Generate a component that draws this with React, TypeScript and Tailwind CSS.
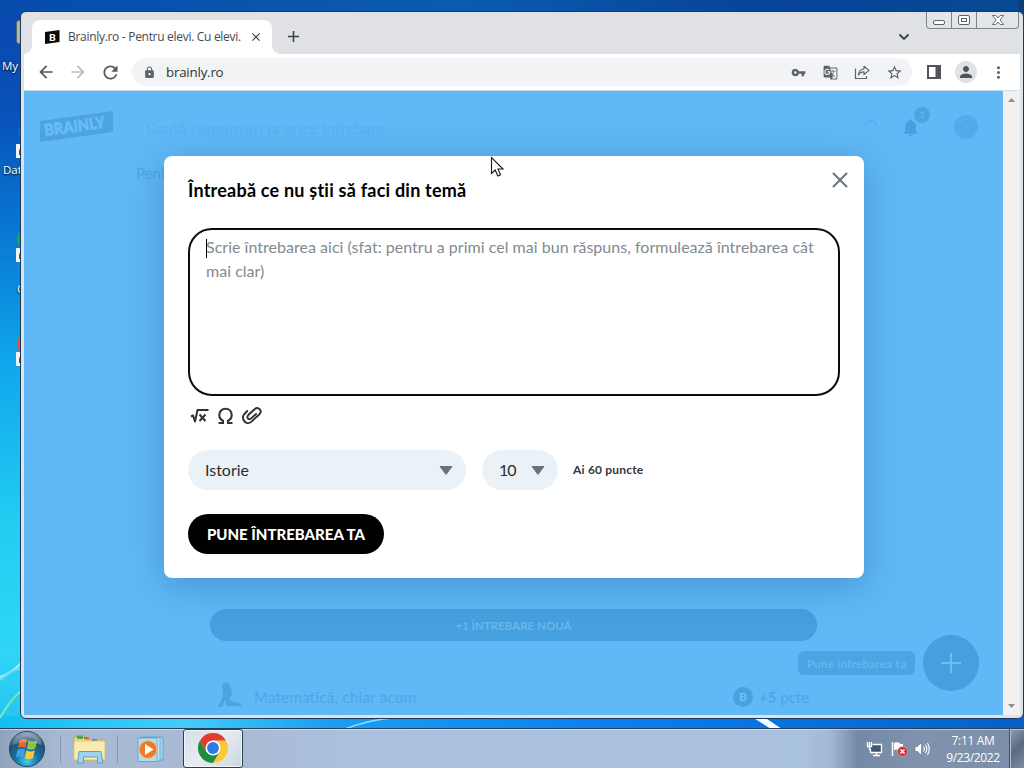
// src/App.tsx
// Windows 7 desktop with a Chrome window open on the ask-question dialog
import type { ReactNode } from 'react';
import {
  MdAdd,
  MdArrowBack,
  MdArrowForward,
  MdClose,
  MdGTranslate,
  MdLock,
  MdMoreVert,
  MdNotifications,
  MdPerson,
  MdRefresh,
  MdStarBorder,
  MdVpnKey
} from 'react-icons/md';

function Wallpaper() {
  return (
    <svg className="absolute inset-0" width="1024" height="768" viewBox="0 0 1024 768">
      <defs>
        <linearGradient id="sky" x1="0" y1="0" x2="0" y2="1">
          <stop offset="0" stopColor="#0a48ae" />
          <stop offset="0.14" stopColor="#0850b8" />
          <stop offset="0.3" stopColor="#0877d2" />
          <stop offset="0.48" stopColor="#10a8ec" />
          <stop offset="0.68" stopColor="#22ccf2" />
          <stop offset="0.85" stopColor="#2fd6f6" />
          <stop offset="1" stopColor="#20b8f0" />
        </linearGradient>
        <linearGradient id="top" x1="0" y1="0" x2="1" y2="0">
          <stop offset="0" stopColor="#064cab" />
          <stop offset="0.45" stopColor="#0a5caf" />
          <stop offset="0.75" stopColor="#06439a" />
          <stop offset="1" stopColor="#064a92" />
        </linearGradient>
        <linearGradient id="bottom" x1="0" y1="0" x2="1" y2="0">
          <stop offset="0" stopColor="#14bdf3" />
          <stop offset="0.18" stopColor="#43cdf8" />
          <stop offset="0.32" stopColor="#1a9ff2" />
          <stop offset="0.6" stopColor="#0a7ff0" />
          <stop offset="1" stopColor="#0560c8" />
        </linearGradient>
      </defs>
      <rect width="1024" height="768" fill="url(#sky)" />
      <rect width="1024" height="13" fill="url(#top)" />
      <rect x="1018" width="6" height="768" fill="#0a3f7c" />
      <rect y="716" width="1024" height="14" fill="url(#bottom)" />
      <path d="M0 677 Q12 673 21 663" stroke="#a5ecff" strokeWidth="2" fill="none" />
      <path d="M0 680 Q12 670 21 668" stroke="#6fdcf8" strokeWidth="2" fill="none" />
      <path d="M0 718 Q10 700 21 691" stroke="#7fe8b0" strokeWidth="2" fill="none" />
      <path d="M345 729 Q368 720 392 718" stroke="#8fdcff" strokeWidth="1.5" fill="none" />
      <path d="M752 717 L764 717 L782 729 L771 729 Z" fill="#f4fbff" />
    </svg>
  );
}

function ShortcutArrow() {
  return (
    <svg className="absolute bottom-0 left-[16px]" width="12" height="14" viewBox="0 0 12 14">
      <rect width="12" height="14" fill="#f2f4f7" />
      <path d="M4 11 V7 Q4 5 6 5" stroke="#15386d" strokeWidth="1.6" fill="none" />
    </svg>
  );
}

function DesktopIcons() {
  return (
    <div className="absolute left-0 top-0 h-[400px] w-[40px] text-[11.5px] leading-[14px] text-white font-['Open_Sans','Noto_Sans',sans-serif] [text-shadow:0_1px_2px_#000]">
      <div className="absolute left-[16px] top-[20px] h-[24px] w-[10px] rounded-[3px] border border-[#5c6a58] bg-[#a9b7c2]" />
      <span className="absolute left-[2px] top-[59px]">My</span>
      <div className="absolute left-0 top-[120px] h-[38px] w-[30px]">
        <span className="absolute left-[19px] top-[4px] h-[18px] w-[12px] rounded-full bg-[#a33a6d]" />
        <ShortcutArrow />
      </div>
      <span className="absolute left-[3px] top-[163px]">Dat</span>
      <div className="absolute left-0 top-[224px] h-[38px] w-[30px]">
        <span className="absolute left-[17px] top-[4px] h-[22px] w-[22px] rounded-full bg-[#21a04a]" />
        <ShortcutArrow />
      </div>
      <span className="absolute left-[17px] top-[282px]">G</span>
      <div className="absolute left-0 top-[328px] h-[38px] w-[30px]">
        <span className="absolute left-[17px] top-[4px] h-[24px] w-[24px] rounded-full bg-[#e8503a]" />
        <ShortcutArrow />
      </div>
    </div>
  );
}

function CaptionButtons() {
  return (
    <div className="absolute right-[4px] top-0 flex h-[17px] w-[93px] rounded-b-[4px] border border-t-0 border-[#80848c] bg-[#e3e5e9]">
      <div className="flex w-[25px] justify-center border-r border-[#80848c] pt-[8px]">
        <span className="h-[5px] w-[12px] rounded-[2px] border border-[#5c6068] bg-white" />
      </div>
      <div className="flex w-[25px] justify-center border-r border-[#80848c] pt-[3px]">
        <span className="flex h-[10px] w-[12px] items-center justify-center rounded-[2px] border border-[#5c6068] bg-white">
          <span className="h-[4px] w-[6px] border border-[#5c6068]" />
        </span>
      </div>
      <div className="flex flex-1 justify-center pt-[3px]">
        <svg width="12" height="10" viewBox="0 0 12 10">
          <path d="M0.5 0.5 H3.8 L6 3 L8.2 0.5 H11.5 L8 5 L11.5 9.5 H8.2 L6 7 L3.8 9.5 H0.5 L4 5 Z" fill="#fff" stroke="#5c6068" strokeWidth="0.9" />
        </svg>
      </div>
    </div>
  );
}

function TabStrip() {
  return (
    <div className="relative flex h-[42px] items-end rounded-t-[5px] bg-[#dfe1e5] pl-[8px]">
      <div className="relative flex h-[34px] w-[240px] items-center rounded-t-[8px] bg-white pl-[13px]">
        <span className="absolute -left-[8px] bottom-0 h-[8px] w-[8px] bg-[radial-gradient(circle_at_0_0,transparent_7.5px,white_8px)]" />
        <span className="absolute -right-[8px] bottom-0 h-[8px] w-[8px] bg-[radial-gradient(circle_at_100%_0,transparent_7.5px,white_8px)]" />
        <svg width="15" height="16" viewBox="0 0 15 16">
          <path d="M0 3 L14.5 1 V13 L0 15 Z" fill="#0a0a0a" />
          <text x="3.9" y="12" fontSize="10" fontWeight="900" fill="#fff" fontFamily="Lato">B</text>
        </svg>
        <span className="ml-[8px] w-[176px] whitespace-nowrap text-[12px] tracking-[-0.3px] text-[#45494d] font-['Open_Sans','Noto_Sans',sans-serif]">
          Brainly.ro - Pentru elevi. Cu elevi.
        </span>
        <MdClose className="ml-[5px] text-[14px] text-[#3c4043]" />
      </div>
      <MdAdd className="mb-[8px] ml-[12px] text-[19px] text-[#3c4043]" />
      <svg className="mb-[11px] ml-auto mr-[110px]" width="12" height="12" viewBox="0 0 12 12">
        <path d="M1.5 3.5 L6 8 L10.5 3.5" fill="none" stroke="#3c4043" strokeWidth="1.8" />
      </svg>
    </div>
  );
}

function BarIcon({ children }: { children: ReactNode }) {
  return <span className="flex w-8 items-center justify-center">{children}</span>;
}

function AddressBar() {
  return (
    <div className="flex h-[36px] items-center bg-white pl-[6px] text-[#5f6368]">
      <BarIcon><MdArrowBack className="text-[20px] text-[#54585c]" /></BarIcon>
      <BarIcon><MdArrowForward className="text-[20px] text-[#b9bbbe]" /></BarIcon>
      <BarIcon><MdRefresh className="text-[21px] text-[#54585c]" /></BarIcon>
      <div className="ml-[6px] flex h-[28px] w-[780px] items-center rounded-full bg-[#f1f3f4] pl-[11px]">
        <MdLock className="text-[13px]" />
        <span className="ml-[10px] flex-1 text-[13.3px] leading-[18px] tracking-[-0.2px] text-[#303236] font-['Open_Sans','Noto_Sans',sans-serif]">
          brainly.ro
        </span>
        <BarIcon><MdVpnKey className="text-[15px]" /></BarIcon>
        <BarIcon><MdGTranslate className="text-[15px]" /></BarIcon>
        <BarIcon>
          <svg width="16" height="16" viewBox="0 0 16 16" fill="none" stroke="#5f6368" strokeWidth="1.2">
            <path d="M1.5 4.5 V14.5 H12.5 V12" />
            <path d="M4.5 11 C4.8 7.5 6.5 5.3 10 5 V2.3 L15 6.4 L10 10.5 V7.8 C7.5 7.8 5.7 8.8 4.5 11 Z" strokeLinejoin="round" />
          </svg>
        </BarIcon>
        <BarIcon><MdStarBorder className="text-[17px]" /></BarIcon>
        <span className="w-[2px]" />
      </div>
      <span className="w-[6px]" />
      <BarIcon>
        <svg width="14" height="14" viewBox="0 0 14 14">
          <path d="M0 0 H14 V14 H0 Z M2 2 V12 H8.5 V2 Z" fill="#505357" fillRule="evenodd" />
        </svg>
      </BarIcon>
      <BarIcon>
        <span className="flex h-[22px] w-[22px] items-center justify-center rounded-full bg-[#dee1e6]">
          <MdPerson className="text-[18px] text-[#505357]" />
        </span>
      </BarIcon>
      <BarIcon><MdMoreVert className="text-[19px]" /></BarIcon>
    </div>
  );
}

// Site content, washed out by the blue dialog backdrop
function DimmedPage() {
  return (
    <div className="flex h-full flex-col bg-[#60b8f6] font-['Lato','Open_Sans',sans-serif]">
      <header className="flex h-[72px] items-center pl-[16px] pr-[25px]">
        <svg width="73" height="32" viewBox="0 0 73 32">
          <path d="M0 10 L73 0 V21 L0 31 Z" fill="#4ba4e1" />
          <text x="5" y="25" fontSize="16" fontWeight="900" fill="#69bcf6" stroke="#69bcf6" strokeWidth="0.6" fontFamily="Lato" textLength="61" lengthAdjust="spacingAndGlyphs" transform="rotate(-7.8 5 25)">BRAINLY</text>
        </svg>
        <span className="ml-[33px] mt-[2px] whitespace-nowrap text-[15px] tracking-[0.4px] text-[#59b1f0]">Caută răspunsuri la orice întrebare</span>
        <svg className="ml-auto" width="16" height="16" viewBox="0 0 16 16">
          <path d="M2 7 A5.5 5.5 0 0 1 13 7" fill="none" stroke="#57afee" strokeWidth="1.5" />
        </svg>
        <div className="relative ml-[21px] text-[21px] text-[#46a0df]">
          <MdNotifications />
          <span className="absolute -top-[10px] left-[14px] flex h-[16px] w-[16px] items-center justify-center rounded-full bg-[#4ba3e2] text-[9px] font-bold text-[#64b8f4]">1</span>
        </div>
        <div className="ml-[33px] flex h-[24px] w-[24px] items-center justify-center rounded-full bg-[#52abeb]">
          <span className="h-[13px] w-[13px] rounded-full border border-[#4ca5e6]" />
        </div>
      </header>
      <p className="ml-[112px] text-[15px] leading-[20px] text-[#4fa5e2]">Pentru tine</p>
      <div className="ml-[186px] mt-[426px] flex h-[32px] w-[607px] shrink-0 items-center justify-center rounded-full bg-[#469fde] pt-px text-[11.5px] font-bold text-[#68b7ee]">
        +1 ÎNTREBARE NOUĂ
      </div>
      <div className="ml-[193px] mt-[40px] flex h-[32px] items-center text-[15px] text-[#4da6e4]">
        <svg className="mb-[4px]" width="25" height="26" viewBox="0 0 25 26" fill="#4ba4e2">
          <path d="M5 2 Q10 -1 13 3 L15 12 L12 18 L24 22 V24 H10 L8 17 L5 25 H1 L6 14 Z" />
        </svg>
        <span className="ml-[12px] w-[479px] text-[15px] tracking-[0.3px]">Matematică, chiar acum</span>
        <span className="flex h-[20px] w-[20px] items-center justify-center rounded-full bg-[#48a1e0] text-[12px] font-black text-[#70bff6]">B</span>
        <span className="ml-[6px]"><b>+5</b> pcte</span>
      </div>
    </div>
  );
}

function AskButton() {
  return (
    <div className="absolute bottom-[24px] right-[24px] flex items-center gap-[8px]">
      <span className="flex h-[24px] w-[117px] items-center justify-center whitespace-nowrap rounded-[6px] bg-[#4ba4e3] pt-px text-[11.5px] font-bold tracking-[0.3px] text-[#66b7f0] font-['Lato',sans-serif]">
        Pune întrebarea ta
      </span>
      <span className="flex h-[56px] w-[56px] items-center justify-center rounded-full bg-[#469fde]">
        <svg width="20" height="20" viewBox="0 0 20 20">
          <path d="M10 0 V20 M0 10 H20" stroke="#70bdf3" strokeWidth="2" />
        </svg>
      </span>
    </div>
  );
}

function Caret() {
  return (
    <svg width="14" height="9" viewBox="0 0 14 9">
      <path d="M1 0.5 H13 L7 8.5 Z" fill="#687381" stroke="#687381" strokeLinejoin="round" />
    </svg>
  );
}

function AskDialog() {
  return (
    <div className="h-[422px] w-[700px] rounded-[8px] bg-white px-[24px] pt-[12px] text-black shadow-[0_8px_36px_rgba(30,100,160,0.42)] font-['Lato','Open_Sans',sans-serif]">
      <div className="flex items-start justify-between">
        <h1 className="pt-[10px] text-[18px] font-bold leading-[24px] tracking-[0.22px]">
          Întreabă ce nu știi să faci din temă
        </h1>
        <svg className="mr-[-8px] mt-[4px]" width="16" height="16" viewBox="0 0 16 16">
          <path d="M1.5 1.5 L14.5 14.5 M14.5 1.5 L1.5 14.5" stroke="#687078" strokeWidth="1.9" strokeLinecap="round" />
        </svg>
      </div>
      <div className="relative mt-[26px] h-[168px] w-[652px] rounded-[24px] border-2 border-[#0c0c0e] px-[16px] pt-[5px] text-[16px] leading-[24px] tracking-[0.02px] text-[#818b91]">
        <span className="absolute left-[16px] top-[9px] h-[19px] w-px bg-black" />
        <span className="block whitespace-nowrap">
          Scrie întrebarea aici (sfat: pentru a primi cel mai bun răspuns, formulează întrebarea cât
        </span>
        <span className="block">mai clar)</span>
      </div>
      <div className="mt-[10px] flex h-[20px] items-center gap-[7px] pl-[2px]">
        <svg width="20" height="18" viewBox="0 0 20 18" fill="none" stroke="#2f3136" strokeWidth="2">
          <path d="M1 9.5 L3 8.5 L5 14.5 L7.5 3 H18.5" strokeLinejoin="round" />
          <path d="M9.5 7.5 L15.5 14 M15.5 7.5 L9.5 14" />
        </svg>
        <svg width="17" height="18" viewBox="0 0 17 18" fill="none" stroke="#2f3136" strokeWidth="2.1">
          <path d="M1.5 16 H6 V13.8 C3.5 12.5 2.3 10.5 2.3 8 C2.3 4.3 5 1.8 8.5 1.8 C12 1.8 14.7 4.3 14.7 8 C14.7 10.5 13.5 12.5 11 13.8 V16 H15.5" />
        </svg>
        <svg width="22" height="18" viewBox="0 0 22 18" fill="none" stroke="#2f3136" strokeWidth="1.9" strokeLinecap="round">
          <path d="M6.2 4 L3.4 7 C-0.4 11.5 5 19.5 10.5 14.6 L18.5 7.2 C21.8 3.8 17.2 -1 13.6 2.2 L7.5 7.8 C4.7 10.7 8 13.5 10.3 11.4 L15 7" />
        </svg>
      </div>
      <div className="mt-[24px] flex items-center text-[16px] text-[#2a2d31]">
        <div className="flex h-[40px] w-[278px] items-center justify-between rounded-full bg-[#ebf2f7] pl-[17px] pr-[13px]">
          <span className="pb-px">Istorie</span>
          <Caret />
        </div>
        <div className="ml-[16px] flex h-[40px] w-[76px] items-center justify-between rounded-full bg-[#ebf2f7] pl-[17px] pr-[13px]">
          <span className="pb-px tracking-[-1px]">10</span>
          <Caret />
        </div>
        <span className="ml-[15px] text-[12px] font-bold tracking-[0.2px] text-[#34373c]">Ai 60 puncte</span>
      </div>
      <button className="mt-[24px] flex h-[40px] w-[196px] items-center justify-center whitespace-nowrap rounded-full bg-black pt-px text-[15px] font-black text-white">
        PUNE ÎNTREBAREA TA
      </button>
    </div>
  );
}

function Scrollbar() {
  return (
    <div className="flex w-[17px] flex-col items-center justify-between bg-[#f1f1f1] py-[7px]">
      <svg width="7" height="4" viewBox="0 0 7 4"><path d="M0 4 L3.5 0 L7 4 Z" fill="#8d8d8d" /></svg>
      <svg width="7" height="4" viewBox="0 0 7 4"><path d="M0 0 L3.5 4 L7 0 Z" fill="#8d8d8d" /></svg>
    </div>
  );
}

function BrowserWindow() {
  return (
    <div className="absolute left-[20px] top-[11px] h-[708px] w-[1004px] rounded-[6px] border border-[#1c3a5c] bg-[#dce4ea] px-[3px] pb-[3px]">
      <TabStrip />
      <AddressBar />
      <div className="h-px bg-[#c9dfea]" />
      <div className="flex h-[624px]">
        <div className="relative w-[979px] shrink-0 overflow-hidden">
          <DimmedPage />
          <AskButton />
          <div className="absolute inset-0 flex items-start justify-center pl-[1px] pt-[65px]">
            <AskDialog />
          </div>
        </div>
        <Scrollbar />
      </div>
      <CaptionButtons />
    </div>
  );
}

function StartOrb() {
  return (
    <svg width="38" height="38" viewBox="0 0 38 38">
      <defs>
        <radialGradient id="orb" cx="0.5" cy="0.85" r="0.85">
          <stop offset="0" stopColor="#3cd0ee" />
          <stop offset="0.4" stopColor="#156fa3" />
          <stop offset="0.75" stopColor="#27506f" />
          <stop offset="1" stopColor="#a9bdcc" />
        </radialGradient>
      </defs>
      <circle cx="19" cy="19" r="17.5" fill="url(#orb)" stroke="#24435e" strokeWidth="1" />
      <path d="M11.5 10.5 Q15 7.5 19 10 L17.3 18 Q13.5 15.8 10 18 Z" fill="#e8622c" />
      <path d="M20.5 10.7 Q25 13 29 10.5 L27.2 18.5 Q23 21 18.8 18.7 Z" fill="#8ec43f" />
      <path d="M9.5 19.8 Q13.3 17.6 17 19.8 L15.3 27.5 Q11.5 25.3 7.8 27.5 Z" fill="#3f9fe0" />
      <path d="M18.4 20.3 Q22.5 22.7 26.8 20.3 L25 28 Q21 30.5 16.8 28.2 Z" fill="#fbc93c" />
      <path d="M4 15 A15.8 15.8 0 0 1 34 15 Q19 9 4 15 Z" fill="#fff" opacity="0.25" />
    </svg>
  );
}

function ExplorerIcon() {
  return (
    <svg width="34" height="30" viewBox="0 0 34 30">
      <path d="M1 3 H14 L17 6 H32 V26 H1 Z" fill="#f0dc8a" stroke="#c9a94e" />
      <path d="M4 1.5 H10 V5 H4 Z" fill="#4ba84b" />
      <path d="M11 3 H16 V5.5 H11 Z" fill="#d0683a" />
      <path d="M19 5 H24 V7.5 H19 Z" fill="#4f8fd6" />
      <path d="M1 7 H32 V26 H1 Z" fill="#f9ecae" stroke="#dcc070" strokeWidth="0.8" />
      <path d="M6 17.5 H28 L30 29 H24.5 V23 H10.5 V29 H4.5 Z" fill="#9cd4ee" stroke="#5aa3cd" />
    </svg>
  );
}

function MediaPlayerIcon() {
  return (
    <svg width="30" height="28" viewBox="0 0 30 28">
      <path d="M6 2 H26 V25 H6 Z" fill="#a8d6ee" stroke="#5b9fc6" strokeWidth="0.8" />
      <path d="M3 2.5 H23 V26 H3 Z" fill="#bfe3f3" stroke="#5b9fc6" strokeWidth="0.8" />
      <path d="M1 3 H20 V26.5 H1 Z" fill="#b4dcf0" stroke="#5b9fc6" strokeWidth="0.8" />
      <circle cx="11" cy="14.5" r="8.8" fill="#ee7a22" stroke="#f6b27c" />
      <path d="M8 9 L16.5 14.5 L8 20 Z" fill="#fff" />
    </svg>
  );
}

function ChromeIcon() {
  return (
    <svg width="30" height="30" viewBox="0 0 30 30">
      <path d="M15 7.5 H28 A15 15 0 0 1 15 30 L21.5 18.7 Z" fill="#fcc934" />
      <path d="M2 7.5 L8.5 18.7 L15 22 L21.5 18.7 L15 30 A15 15 0 0 1 2 7.5 Z" fill="#1e8e3e" />
      <path d="M2 7.5 A15 15 0 0 1 28 7.5 H15 L8.6 18.8 Z" fill="#e33b2e" />
      <circle cx="15" cy="15" r="7.5" fill="#fff" />
      <circle cx="15" cy="15" r="5.9" fill="#2f78e8" />
    </svg>
  );
}

function Tray() {
  return (
    <div className="flex items-center">
      <svg width="17" height="16" viewBox="0 0 17 16" fill="none" stroke="#fff" strokeWidth="1.3">
        <path d="M6.5 3.5 H15.5 V11.5 H4.5 V8" fill="#40576f" />
        <path d="M10.5 11.5 V14 M7 14.5 H14" />
        <path d="M1.5 1 V5.5 H5.5 V1 M3.5 1 V9" />
      </svg>
      <svg className="ml-[8px]" width="18" height="16" viewBox="0 0 18 16">
        <path d="M1.5 1 V15" stroke="#fff" strokeWidth="1.5" />
        <path d="M3 2 Q6 0.5 9 2.5 Q11 3.5 12 2.5 V9 Q9 10.5 7 9 Q5 8 3 9 Z" fill="#fff" />
        <circle cx="11.5" cy="10.5" r="5" fill="#d3332e" stroke="#f0b4ae" strokeWidth="0.6" />
        <path d="M9.5 8.5 L13.5 12.5 M13.5 8.5 L9.5 12.5" stroke="#fff" strokeWidth="1.5" />
      </svg>
      <svg className="ml-[5px]" width="17" height="16" viewBox="0 0 17 16">
        <path d="M1 5.5 H3.5 L7.5 1.5 V14.5 L3.5 10.5 H1 Z" fill="#fff" stroke="#4a5b70" strokeWidth="0.5" />
        <path d="M9.5 5.5 Q11 8 9.5 10.5 M11.5 3.8 Q14 8 11.5 12.2 M13.5 2 Q17 8 13.5 14" fill="none" stroke="#fff" strokeWidth="1.1" />
      </svg>
    </div>
  );
}

function Taskbar() {
  return (
    <div className="absolute bottom-0 left-0 flex h-[40px] w-full items-center border-t border-[#23405f] bg-[linear-gradient(to_right,#8fa3bd_0,#a8b9d3_60px,#a9bad4_240px,#a9c0de_340px,#a9c2de_800px,#a2b8d3_830px,#7489a5_858px,#8093ae_920px,#7c8ea8_1024px)] shadow-[inset_0_1px_0_rgba(255,255,255,0.45)]">
      <div className="ml-[8px]"><StartOrb /></div>
      <span className="ml-[14px] h-[28px] w-px bg-[#8797ae]" />
      <div className="ml-[12px]"><ExplorerIcon /></div>
      <span className="ml-[10px] h-[28px] w-px bg-[#8797ae]" />
      <div className="ml-[19px]"><MediaPlayerIcon /></div>
      <div className="ml-[16px] flex h-[39px] w-[60px] items-center justify-center rounded-[3px] border border-[#2c3f56] bg-[linear-gradient(135deg,#d3dce6,#e7ecf1_45%,#cdd6e0)] pb-px shadow-[inset_0_0_0_1px_#f3f6f9]">
        <ChromeIcon />
      </div>
      <div className="ml-auto"><Tray /></div>
      <div className="ml-[14px] w-[56px] whitespace-nowrap text-center text-[12px] leading-[17px] tracking-[-0.35px] text-white font-['Open_Sans','Noto_Sans',sans-serif]">
        <div>7:11 AM</div>
        <div>9/23/2022</div>
      </div>
      <div className="ml-[8px] h-[39px] w-[15px] border-l border-[#3e4f63] bg-[linear-gradient(135deg,#8f9caf,#5a6b80_50%,#7d8da2)] shadow-[inset_1px_1px_0_#b6c1cf]" />
    </div>
  );
}

function Cursor() {
  return (
    <svg className="absolute left-[490px] top-[156px]" width="16" height="24" viewBox="0 0 16 24">
      <path d="M1.5 1.5 V17.5 L5.2 14 L7.8 20 L10.5 18.8 L8 13 H13 Z" fill="#fff" stroke="#15171a" strokeWidth="1.1" />
    </svg>
  );
}

export default function App() {
  return (
    <div className="relative h-[768px] w-[1024px] overflow-hidden">
      <Wallpaper />
      <DesktopIcons />
      <BrowserWindow />
      <Taskbar />
      <Cursor />
    </div>
  );
}
